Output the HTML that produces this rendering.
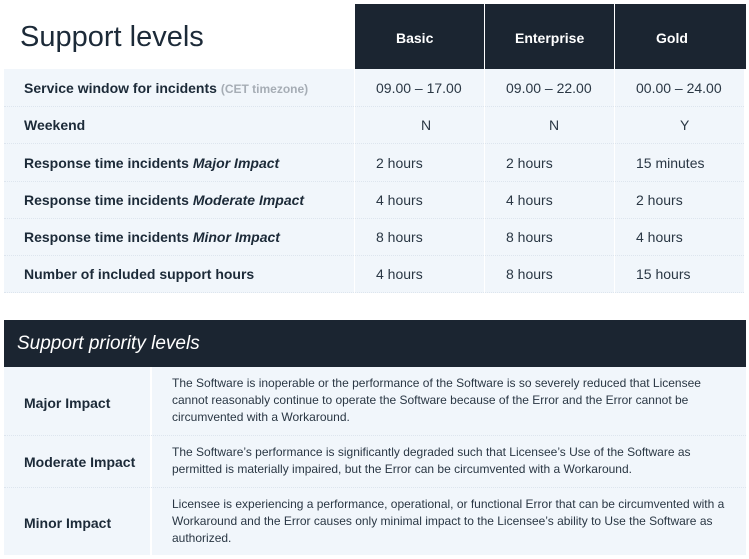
<!DOCTYPE html>
<html><head><style>
body{margin:0;width:749px;height:559px;background:#fff;font-family:"Liberation Sans",sans-serif;color:#1c2a38;position:relative;overflow:hidden}
.a{position:absolute}
.bg{background:#f1f6fb}
.dk{background:#1b2531;color:#fff}
.lbl{font-weight:bold;font-size:14px;left:24px}
.v{font-size:14px;color:#2a3744}
.d{font-size:12px;color:#2a3744;line-height:17px;left:172px;width:556px}
.hl{border-top:1px dotted #dde5ee}
.h{color:#fff;font-weight:bold;font-size:14px;top:30px}
</style></head><body>
<div class="a" style="left:20px;top:21px;font-size:29px;font-weight:300;color:#1c2a38">Support levels</div>
<div class="a dk" style="left:355px;top:4px;width:129px;height:65px"></div>
<div class="a dk" style="left:485px;top:4px;width:129px;height:65px"></div>
<div class="a dk" style="left:615px;top:4px;width:131px;height:65px"></div>
<div class="a h" style="left:396px">Basic</div>
<div class="a h" style="left:515px">Enterprise</div>
<div class="a h" style="left:656px">Gold</div>
<div class="a bg" style="left:4px;top:69px;width:350px;height:224px"></div>
<div class="a bg" style="left:355px;top:69px;width:129px;height:224px"></div>
<div class="a bg" style="left:485px;top:69px;width:129px;height:224px"></div>
<div class="a bg" style="left:615px;top:69px;width:129px;height:224px"></div>
<div class="a hl" style="left:4px;top:106px;width:740px"></div>
<div class="a hl" style="left:4px;top:143px;width:740px"></div>
<div class="a hl" style="left:4px;top:181px;width:740px"></div>
<div class="a hl" style="left:4px;top:218px;width:740px"></div>
<div class="a hl" style="left:4px;top:255px;width:740px"></div>
<div class="a hl" style="left:4px;top:292px;width:740px"></div>

<div class="a lbl" style="top:80px">Service window for incidents <span style="color:#a6adb5;font-size:12px">(CET timezone)</span></div>
<div class="a lbl" style="top:117px">Weekend</div>
<div class="a lbl" style="top:155px">Response time incidents <i>Major Impact</i></div>
<div class="a lbl" style="top:192px">Response time incidents <i>Moderate Impact</i></div>
<div class="a lbl" style="top:229px">Response time incidents <i>Minor Impact</i></div>
<div class="a lbl" style="top:266px">Number of included support hours</div>

<div class="a v" style="left:376px;top:80px">09.00 – 17.00</div>
<div class="a v" style="left:506px;top:80px">09.00 – 22.00</div>
<div class="a v" style="left:636px;top:80px">00.00 – 24.00</div>
<div class="a v" style="left:421px;top:117px">N</div>
<div class="a v" style="left:549px;top:117px">N</div>
<div class="a v" style="left:680px;top:117px">Y</div>
<div class="a v" style="left:376px;top:155px">2 hours</div>
<div class="a v" style="left:506px;top:155px">2 hours</div>
<div class="a v" style="left:636px;top:155px">15 minutes</div>
<div class="a v" style="left:376px;top:192px">4 hours</div>
<div class="a v" style="left:506px;top:192px">4 hours</div>
<div class="a v" style="left:636px;top:192px">2 hours</div>
<div class="a v" style="left:376px;top:229px">8 hours</div>
<div class="a v" style="left:506px;top:229px">8 hours</div>
<div class="a v" style="left:636px;top:229px">4 hours</div>
<div class="a v" style="left:376px;top:266px">4 hours</div>
<div class="a v" style="left:506px;top:266px">8 hours</div>
<div class="a v" style="left:636px;top:266px">15 hours</div>

<div class="a dk" style="left:4px;top:320px;width:742px;height:47px"></div>
<div class="a" style="left:17px;top:333px;color:#fff;font-size:19px;font-style:italic;font-weight:300">Support priority levels</div>
<div class="a bg" style="left:4px;top:367px;width:146px;height:188px"></div>
<div class="a bg" style="left:152px;top:367px;width:594px;height:188px"></div>
<div class="a hl" style="left:4px;top:435px;width:742px"></div>
<div class="a hl" style="left:4px;top:487px;width:742px"></div>
<div class="a lbl" style="top:395px">Major Impact</div>
<div class="a lbl" style="top:454px">Moderate Impact</div>
<div class="a lbl" style="top:515px">Minor Impact</div>
<div class="a d" style="top:375px">The Software is inoperable or the performance of the Software is so severely reduced that Licensee cannot reasonably continue to operate the Software because of the Error and the Error cannot be circumvented with a Workaround.</div>
<div class="a d" style="top:444px">The Software’s performance is significantly degraded such that Licensee’s Use of the Software as permitted is materially impaired, but the Error can be circumvented with a Workaround.</div>
<div class="a d" style="top:496px">Licensee is experiencing a performance, operational, or functional Error that can be circumvented with a Workaround and the Error causes only minimal impact to the Licensee’s ability to Use the Software as authorized.</div>
</body></html>
